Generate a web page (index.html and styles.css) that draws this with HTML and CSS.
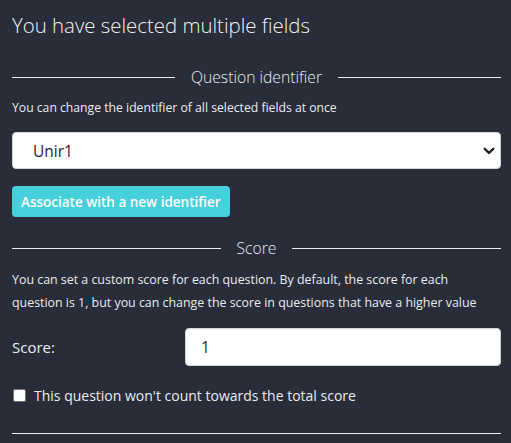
FILE: index.html
```html
<!DOCTYPE html>
<html>
<head>
<meta charset="utf-8">
<link rel="stylesheet" href="styles.css">
</head>
<body>
<div class="panel">
  <h4 class="title">You have selected multiple fields</h4>
  <div class="divider"><span>Question identifier</span></div>
  <p class="small">You can change the identifier of all selected fields at once</p>
  <div class="select">
    <span>Unir1</span>
    <svg class="chev" width="12" height="8" viewBox="0 0 12 8"><path d="M1.8 1.8 L6 6 L10.2 1.8" fill="none" stroke="#222" stroke-width="2.4" stroke-linecap="round" stroke-linejoin="round"/></svg>
  </div>
  <button class="btn">Associate with a new identifier</button>
  <div class="divider score-div"><span>Score</span></div>
  <p class="desc">You can set a custom score for each question. By default, the score for each question is 1, but you can change the score in questions that have a higher value</p>
  <div class="row">
    <label class="lbl">Score:</label>
    <div class="input">1</div>
  </div>
  <div class="check"><span class="box"></span><span>This question won't count towards the total score</span></div>
  <hr class="bottom">
</div>
</body>
</html>
```
FILE: styles.css
```css
html, body { margin: 0; padding: 0; background: #282d39; }
body { font-family: "Open Sans", "Lato", sans-serif; color: #e9ecef; }
.panel { padding: 0 10px 0 12px; width: 489px; }
.title { margin: 0; padding-top: 11px; height: 56px; box-sizing: border-box; font-size: 20.4px; font-weight: 300; color: #f1f3f5; }
.divider { display: flex; align-items: center; gap: 16px; font-size: 15.7px; font-weight: 300; height: 24px; margin-top: 9px; }
.divider::before, .divider::after { content: ""; flex: 1; height: 1px; background: #e9ecef; }
.small { margin: 11px 0 0; font-size: 12.2px; line-height: 16px; }
.select { margin-top: 16px; height: 37px; box-sizing: border-box; background: #fff; border: 1px solid #ced4da; border-radius: 4px; display: flex; align-items: center; justify-content: space-between; padding: 0 5px 0 20px; color: #212529; font-size: 15.5px; }
.btn { margin-top: 17px; height: 31px; padding: 0 9px; border: none; border-radius: 4px; background: #45d0db; color: #fff; font-family: inherit; font-size: 13.5px; font-weight: 600; display: block; }
.score-div { margin-top: 19px; }
.desc { margin: 8px 0 0; font-size: 12.4px; line-height: 23px; }
.row { display: flex; align-items: center; margin-top: 14px; }
.lbl { width: 173px; font-size: 15px; }
.input { flex: 1; height: 38px; box-sizing: border-box; background: #fff; border: 1px solid #ced4da; border-radius: 4px; display: flex; align-items: center; padding-left: 15px; color: #212529; font-size: 15.5px; }
.check { display: flex; align-items: center; gap: 8px; margin-top: 20px; font-size: 14px; }
.box { width: 11px; height: 11px; background: #fff; border: 1px solid #767676; border-radius: 2px; margin-left: 1px; }
.bottom { margin: 28px 0 0; border: none; border-top: 1px solid #e9ecef; }
```
